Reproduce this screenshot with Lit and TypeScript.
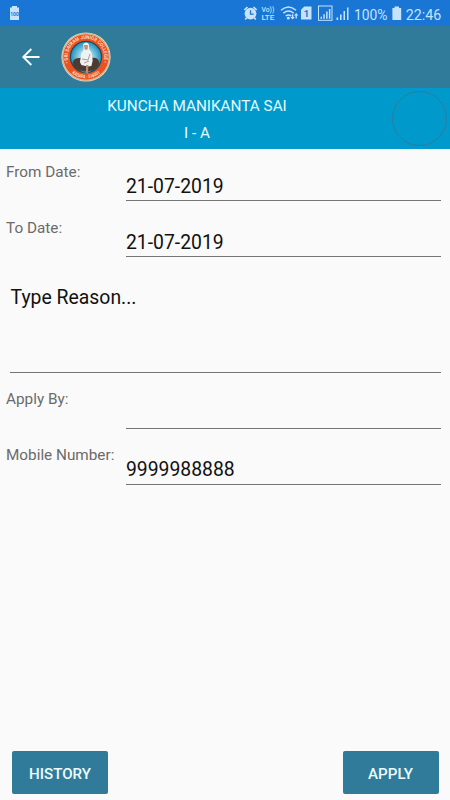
import { LitElement, html, css, svg } from "lit";
import { customElement, property } from "lit/decorators.js";

@customElement("status-bar")
class StatusBar extends LitElement {
  static styles = css`
    :host { display: block; height: 26px; background: #1976d5; }
    svg { display: block; }
    text { font-family: Roboto, sans-serif; fill: #c5e3fb; }
    .fill { fill: #c5e3fb; }
    .line { fill: none; stroke: #c5e3fb; }
    .cutline { fill: none; stroke: #1976d5; }
    .tiny { font-size: 5.8px; font-weight: 700; fill: #1976d5; }
    .net { font-size: 7.2px; font-weight: 500; }
    .lte { font-size: 8px; font-weight: 500; }
    .sim { font-size: 9.5px; font-weight: 700; fill: #1976d5; }
    .big { font-size: 15.2px; }
  `;
  render() {
    return html`<svg width="450" height="26" viewBox="0 0 450 26">
      <path class="fill" d="M12 6h5v1.500h2V20h-9V7.500h2z" />
      <text class="tiny" x="10.200" y="16" textLength="8.600" lengthAdjust="spacingAndGlyphs">100</text>
      <circle class="fill" cx="250.500" cy="13.600" r="5.900" />
      <path class="line" stroke-width="1.700" d="M244.300 10l3.200-3M256.700 10l-3.200-3M246.700 17.800l-1.500 1.700M254.300 17.800l1.500 1.700" />
      <path class="cutline" stroke-width="1.300" d="M250.500 10.200v4h3.200" />
      <text class="net" x="261.500" y="12.300" textLength="12.800" lengthAdjust="spacingAndGlyphs">Vo))</text>
      <text class="lte" x="261.500" y="20" textLength="12.800" lengthAdjust="spacingAndGlyphs">LTE</text>
      <path class="line" stroke-width="1.500" d="M281 10.300q7.500-6.600 15 0M283.300 13.200q5.200-4.400 10.400 0M285.700 16q2.800-2.200 5.600 0" />
      <circle class="fill" cx="288.300" cy="18.200" r="1.400" />
      <path class="fill" d="M292.600 19.600l-2.200-2.600h1.500v-2.800h1.400V17h1.500zM296.200 13l2.200 2.600h-1.500v2.900h-1.400v-2.900H294z" />
      <path class="fill" d="M304.300 6.500h7.200V19.500H301V9.800z" />
      <text class="sim" x="303.700" y="17">1</text>
      <rect class="line" x="318.500" y="6" width="13.500" height="14.300" />
      <path class="fill" d="M320.500 16.800h1.500v2h-1.500zM323.300 14.300h1.500v4.500h-1.500zM326.100 11.600h1.500v7.200h-1.500zM328.900 9h1.500v9.800h-1.500z" />
      <path class="fill" d="M336.500 17.500h1.700V20h-1.700zM340 14.500h1.600V20H340zM343.500 11h1.500v9h-1.500zM347 7.500h1.500V20H347z" />
      <text class="big" x="354" y="19.500" textLength="33.500" lengthAdjust="spacingAndGlyphs">100%</text>
      <path class="fill" d="M394.500 6.500h4.500V8h2.200v12h-8.800V8h2.100z" />
      <text class="big" x="405.800" y="19.500" textLength="35.500" lengthAdjust="spacingAndGlyphs">22:46</text>
    </svg>`;
  }
}

@customElement("app-bar")
class AppBar extends LitElement {
  static styles = css`
    :host { display: flex; height: 62px; background: #317b9a; align-items: center; }
    .back { margin-left: 20px; display: block; }
    .logo { margin-left: 20px; margin-top: -1px; display: block; }
    text { font: 700 5px Roboto, sans-serif; fill: #ffdcc4; }
  `;
  render() {
    return html`
      <svg class="back" width="21" height="20" viewBox="0 0 21 20" fill="none" stroke="#f4fdff" stroke-width="1.900">
        <path d="M19.500 10H3.500M11.300 2L3.300 10l8 8" />
      </svg>
      <svg class="logo" width="50" height="50" viewBox="0 0 50 50">
        <defs>
          <radialGradient id="sky"><stop offset="0.150" stop-color="#d9f4fb" /><stop offset="1" stop-color="#1690bd" /></radialGradient>
          <path id="top" d="M7.800 31A18.200 18.200 0 1 1 42.200 31" />
          <path id="bottom" d="M7.500 37.500A21.500 21.500 0 0 0 42.500 37.500" />
        </defs>
        <circle cx="25" cy="25" r="24.600" fill="#ead6b8" />
        <circle cx="25" cy="25" r="23.500" fill="none" stroke="#b58c66" stroke-width="0.500" />
        <circle cx="25" cy="25" r="22.700" fill="#e8531f" />
        <circle cx="25" cy="25" r="15.600" fill="url(#sky)" stroke="#27485b" stroke-width="1.200" />
        <path d="M11.500 31q1-5 7-5l4-1 8 1q7-1 8 5l-2 4.500q-5 4-11.500 4T13 35z" fill="#4d3b32" />
        <path d="M20 38.500q5 2.500 10 0l-1 1.500q-4 1-8 0z" fill="#3298b0" />
        <path d="M22.300 12q2.700-3 5.400 0l.6 5.500 2.200 3 1.200 8-1.300 5.500-4 .5-6-1.500-1.500-3 1.500-9 2.200-3z" fill="#edf3f5" />
        <path d="M23 13q2-2 4 0l-.3 4q-1.500 2-3.200 0z" fill="#c29579" />
        <path d="M22.300 13q2.700-4 5.400 0z" fill="#fff" />
        <path d="M21 27l6 1 2-6M23 31l5-2" fill="none" stroke="#b58d76" stroke-width="0.900" />
        <path d="M25.200 33h2.200l-.5 8.500h-2.200z" fill="#c08763" />
        <text>${svg`<textPath href="#top" textLength="68" lengthAdjust="spacingAndGlyphs">• SRI SAIRAM JUNIOR COLLEGE •</textPath>`}</text>
        <text>${svg`<textPath href="#bottom" startOffset="5" textLength="31" lengthAdjust="spacingAndGlyphs">KADAPA - 516001</textPath>`}</text>
      </svg>`;
  }
}

@customElement("form-row")
class FormRow extends LitElement {
  @property() label = "";
  @property() value = "";
  static styles = css`
    :host { display: flex; height: 56px; box-sizing: border-box; padding: 0 9px 4px 6px; }
    .label { width: 120px; padding-top: var(--label-top, 14px); font-size: 15.3px; line-height: 18px; color: #6b6b6b; white-space: nowrap; }
    .field { flex: 1; border-bottom: 1px solid #757575; padding-top: var(--value-top, 26px); box-sizing: border-box; font-size: 19.350px; line-height: 24px; color: #111; }
  `;
  render() {
    return html`<div class="label">${this.label}</div><div class="field">${this.value}</div>`;
  }
}

@customElement("app-root")
class AppRoot extends LitElement {
  static styles = css`
    :host { display: flex; flex-direction: column; height: 800px; background: #fafafa; font-family: Roboto, sans-serif; overflow: hidden; }
    .banner { display: flex; height: 61px; background: #0099cc; color: #e6fbff; align-items: center; }
    .who { width: 394px; box-sizing: border-box; text-align: center; font-size: 15.3px; line-height: 27px; padding-top: 2px; }
    .avatar { width: 55px; height: 55px; box-sizing: border-box; border: 1px solid #317b9a; border-radius: 50%; margin-left: -2px; }
    .reason { height: 112px; margin: 0 9px 4px 10px; box-sizing: border-box; border-bottom: 1px solid #757575; padding: 25px 0 0 0.5px; font-size: 19.400px; line-height: 24px; color: #111; }
    .contact { --label-top: 13px; --value-top: 25px; }
    .actions { margin-top: auto; display: flex; justify-content: space-between; padding: 0 11.5px 6px 12px; }
    .btn { width: 96px; height: 43px; border: 0; border-radius: 2px; background: #317b9a; color: #edfcff; font: 500 15.1px Roboto, sans-serif; padding: 2px 0 0; }
  `;
  render() {
    return html`
      <status-bar></status-bar>
      <app-bar></app-bar>
      <div class="banner">
        <div class="who"><div>KUNCHA MANIKANTA SAI</div><div>I - A</div></div>
        <div class="avatar"></div>
      </div>
      <form-row label="From Date:" value="21-07-2019"></form-row>
      <form-row label="To Date:" value="21-07-2019"></form-row>
      <div class="reason">Type Reason...</div>
      <form-row class="contact" label="Apply By:"></form-row>
      <form-row class="contact" label="Mobile Number:" value="9999988888"></form-row>
      <div class="actions">
        <button class="btn">HISTORY</button>
        <button class="btn">APPLY</button>
      </div>`;
  }
}
